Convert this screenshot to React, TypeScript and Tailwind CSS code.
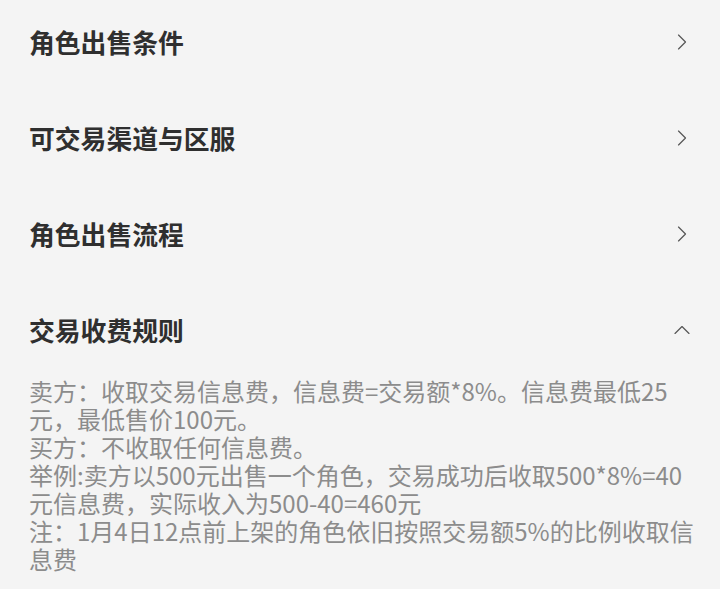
import { ChevronRight, ChevronUp } from "lucide-react";

const sections = ["角色出售条件", "可交易渠道与区服", "角色出售流程"];

const feeLines = [
  "卖方：收取交易信息费，信息费=交易额*8%。信息费最低25",
  "元，最低售价100元。",
  "买方：不收取任何信息费。",
  "举例:卖方以500元出售一个角色，交易成功后收取500*8%=40",
  "元信息费，实际收入为500-40=460元",
  "注：1月4日12点前上架的角色依旧按照交易额5%的比例收取信",
  "息费",
];

const App = () => {
  return (
    <div
      className="h-[589px] w-[720px] overflow-hidden bg-[#f4f4f4] flex flex-col gap-2"
      style={{ fontFamily: '"Noto Sans CJK SC", "Noto Sans", sans-serif' }}
    >
      {sections.map((title) => (
        <div key={title} className="h-[88px] shrink-0 flex items-center justify-between pl-[29px] pr-[24px] pb-[4px]">
          <span className="text-[25.8px] font-bold text-[#2f2f2f] leading-none">{title}</span>
          <ChevronRight className="w-[28px] h-[28px] text-[#555555]" strokeWidth={1} />
        </div>
      ))}

      <div className="shrink-0">
        <div className="h-[88px] flex items-center justify-between pl-[29px] pr-[24px] pb-[4px]">
          <span className="text-[25.8px] font-bold text-[#2f2f2f] leading-none">交易收费规则</span>
          <ChevronUp className="w-[28px] h-[28px] text-[#555555]" strokeWidth={1} />
        </div>
        <div className="pl-[29px] pt-[1px] text-[24px] leading-[28px] text-[#8c8c8c] whitespace-nowrap">
          {feeLines.map((line) => (
            <div key={line}>{line}</div>
          ))}
        </div>
      </div>
    </div>
  );
};

export default App;
